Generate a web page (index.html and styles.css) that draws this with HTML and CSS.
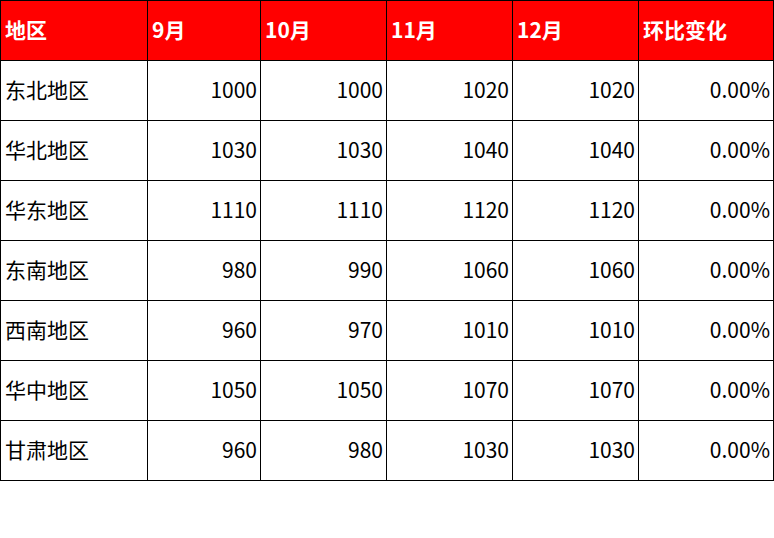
FILE: index.html
```html
<!DOCTYPE html>
<html lang="zh">
<head>
<meta charset="utf-8">
<link rel="stylesheet" href="styles.css">
</head>
<body>
<table class="grid">
  <colgroup>
    <col class="c1"><col class="c2"><col class="c3"><col class="c4"><col class="c5"><col class="c6">
  </colgroup>
  <thead>
    <tr><th>地区</th><th>9月</th><th>10月</th><th>11月</th><th>12月</th><th>环比变化</th></tr>
  </thead>
  <tbody>
    <tr><td class="name">东北地区</td><td>1000</td><td>1000</td><td>1020</td><td>1020</td><td>0.00%</td></tr>
    <tr><td class="name">华北地区</td><td>1030</td><td>1030</td><td>1040</td><td>1040</td><td>0.00%</td></tr>
    <tr><td class="name">华东地区</td><td>1110</td><td>1110</td><td>1120</td><td>1120</td><td>0.00%</td></tr>
    <tr><td class="name">东南地区</td><td>980</td><td>990</td><td>1060</td><td>1060</td><td>0.00%</td></tr>
    <tr><td class="name">西南地区</td><td>960</td><td>970</td><td>1010</td><td>1010</td><td>0.00%</td></tr>
    <tr><td class="name">华中地区</td><td>1050</td><td>1050</td><td>1070</td><td>1070</td><td>0.00%</td></tr>
    <tr><td class="name">甘肃地区</td><td>960</td><td>980</td><td>1030</td><td>1030</td><td>0.00%</td></tr>
  </tbody>
</table>
</body>
</html>
```

FILE: styles.css
```css
html, body {
  margin: 0;
  padding: 0;
  background: #fff;
}
body {
  font-family: "Noto Sans CJK SC", "Noto Sans", sans-serif;
  font-size: 21px;
  color: #000;
}
.grid {
  border-collapse: collapse;
  table-layout: fixed;
  width: 773px;
}
.c1 { width: 147px; }
.c2 { width: 113px; }
.c3 { width: 126px; }
.c4 { width: 126px; }
.c5 { width: 126px; }
.c6 { width: 135px; }
.grid th,
.grid td {
  border: 1px solid #000;
  height: 60px;
  padding: 0 3px 4px 4px;
  line-height: 26px;
  box-sizing: border-box;
  white-space: nowrap;
}
.grid th {
  background: #ff0000;
  color: #fff;
  font-weight: 700;
  text-align: left;
}
.grid td {
  text-align: right;
}
.grid td.name {
  text-align: left;
}
```
